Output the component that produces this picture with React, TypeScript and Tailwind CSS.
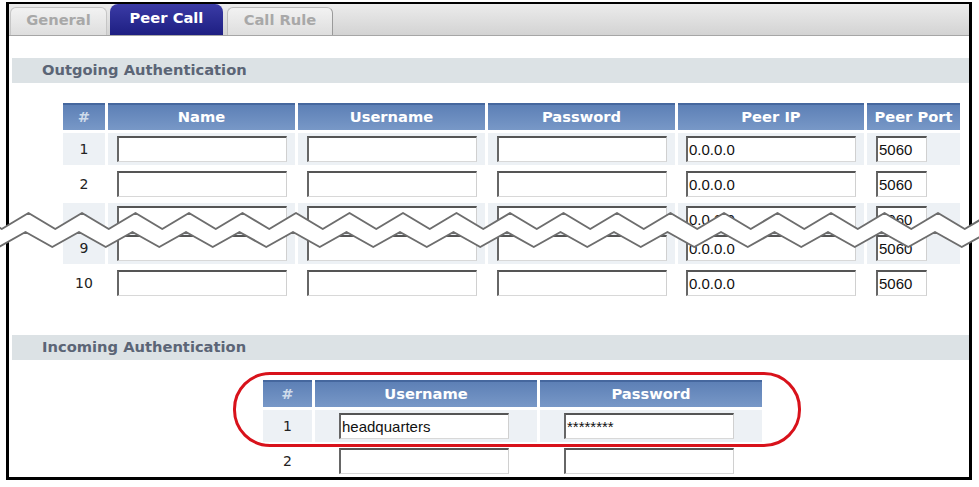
import React from "react"

const outCols = "grid grid-cols-[42px_187px_187px_187px_186px_93px] gap-x-[3px]"
const inCols = "grid grid-cols-[49px_222px_222px] gap-x-[3px]"

const uiFont = "font-['DejaVu_Sans',Verdana,sans-serif]"

// zigzag "torn" break drawn across the outgoing table
function zigPoints(dx: number, yPeak: number, yValley: number) {
    const pts: [number, number][] = []
    let x = 1.75 + dx - 26.75 * 2
    let valley = true
    while (x < 1010) {
        pts.push([x, valley ? yValley : yPeak])
        x += 26.75
        valley = !valley
    }
    return pts
}

const upper = zigPoints(0, 213, 229)
const lower = zigPoints(-3, 232, 247)
const toStr = (p: [number, number][]) => p.map(([x, y]) => `${x},${y}`).join(" ")

function Field({ value = "", small = false }: { value?: string; small?: boolean }) {
    return (
        <input
            readOnly
            value={value}
            className={`${small ? "w-[51px]" : "w-[170px]"} h-[26px] border-t-2 border-l-2 border-r border-b border-t-[#555] border-l-[#666] border-r-[#d0d0d0] border-b-[#d8d8d8] bg-white pl-[1px] text-[15px] text-[#111] outline-none font-['Liberation_Sans',Arial,sans-serif]`}
        />
    )
}

function HeadCell({ label, dim = false }: { label: string; dim?: boolean }) {
    return (
        <div
            className={`flex items-center justify-center h-[27px] border-t-2 border-[#45679e] bg-gradient-to-b from-[#5d80b6] to-[#7898c7] text-[14.7px] font-bold ${dim ? "text-[#cfdbea]" : "text-white"}`}
        >
            {label}
        </div>
    )
}

function OutRow({ n, shaded }: { n: number; shaded: boolean }) {
    const bg = shaded ? "bg-[#edf1f5]" : "bg-white"
    return (
        <div className={`${outCols} h-[32px]`}>
            <div className={`${bg} flex items-center justify-center text-[14px] text-[#222]`}>{n}</div>
            <div className={`${bg} flex items-center justify-center`}><Field /></div>
            <div className={`${bg} flex items-center justify-center`}><Field /></div>
            <div className={`${bg} flex items-center justify-center`}><Field /></div>
            <div className={`${bg} flex items-center justify-center`}><Field value="0.0.0.0" /></div>
            <div className={`${bg} flex items-center pl-[9px]`}><Field value="5060" small /></div>
        </div>
    )
}

function InRow({ n, shaded, user = "", pass = "" }: { n: number; shaded: boolean; user?: string; pass?: string }) {
    const bg = shaded ? "bg-[#edf1f5]" : "bg-white"
    return (
        <div className={`${inCols} h-[32px]`}>
            <div className={`${bg} flex items-center justify-center text-[14px] text-[#222]`}>{n}</div>
            <div className={`${bg} flex items-center pl-6`}><Field value={user} /></div>
            <div className={`${bg} flex items-center pl-6`}><Field value={pass} /></div>
        </div>
    )
}

function SectionBar({ title }: { title: string }) {
    return (
        <div className="ml-[3px] h-[25px] bg-[#dce2e5] flex items-center pl-[30px] text-[14.7px] font-bold text-[#5b6576]">
            {title}
        </div>
    )
}

export default function App() {
    return (
        <div className={`relative w-[979px] h-[487px] bg-white overflow-hidden ${uiFont}`}>
            <div className="ml-[6px] mt-[2px] w-[966px] h-[478px] border-[3px] border-t-2 border-black overflow-hidden">
                {/* tab strip */}
                <div className="flex items-end gap-[3px] pl-[1px] h-[32px] bg-gradient-to-b from-[#ececec] to-[#d3d3d3] border-b border-[#a6a6a6]">
                    <div className="w-[97px] h-[28px] rounded-t-[6px] border border-b-0 border-[#c6c6c6] bg-gradient-to-b from-[#f2f2f2] to-[#dedede] flex items-center justify-center pb-[3px] text-[14.7px] font-bold text-[#a8a8a8]">
                        General
                    </div>
                    <div className="w-[113px] h-[31px] rounded-t-[8px] bg-gradient-to-b from-[#3b3ba6] to-[#1e1e82] flex items-center justify-center pb-[2px] text-[14.7px] font-bold text-white">
                        Peer Call
                    </div>
                    <div className="ml-[1px] w-[106px] h-[28px] rounded-t-[6px] border border-b-0 border-[#bdbdbd] border-r-[#9a9a9a] bg-gradient-to-b from-[#f2f2f2] to-[#dedede] flex items-center justify-center pb-[3px] text-[14.7px] font-bold text-[#a8a8a8]">
                        Call Rule
                    </div>
                </div>

                <div className="mt-[22px]">
                    <SectionBar title="Outgoing Authentication" />
                </div>

                {/* outgoing table */}
                <div className="mt-[20px] ml-[54px] flex flex-col gap-y-[3px]">
                    <div className={outCols}>
                        <HeadCell label="#" dim />
                        <HeadCell label="Name" />
                        <HeadCell label="Username" />
                        <HeadCell label="Password" />
                        <HeadCell label="Peer IP" />
                        <HeadCell label="Peer Port" />
                    </div>
                    <OutRow n={1} shaded />
                    <OutRow n={2} shaded={false} />
                    <div className="h-[26px] overflow-hidden">
                        <OutRow n={3} shaded />
                    </div>
                    <OutRow n={9} shaded />
                    <OutRow n={10} shaded={false} />
                </div>

                <div className="mt-[36px]">
                    <SectionBar title="Incoming Authentication" />
                </div>

                {/* incoming table */}
                <div className="mt-[20px] ml-[254px] flex flex-col gap-y-[3px]">
                    <div className={inCols}>
                        <HeadCell label="#" dim />
                        <HeadCell label="Username" />
                        <HeadCell label="Password" />
                    </div>
                    <InRow n={1} shaded user="headquarters" pass="********" />
                    <InRow n={2} shaded={false} />
                </div>
            </div>

            {/* break marks over the skipped rows */}
            <svg className="absolute left-0 top-0 w-[979px] h-[487px] pointer-events-none" viewBox="0 0 979 487">
                <polygon points={toStr([...upper, ...[...lower].reverse()])} fill="white" />
                <polyline points={toStr(upper)} fill="none" stroke="#6d6d6d" strokeWidth="2" strokeLinejoin="round" />
                <polyline points={toStr(lower)} fill="none" stroke="#6d6d6d" strokeWidth="2" strokeLinejoin="round" />
            </svg>

            {/* highlight around the first incoming row */}
            <div className="absolute left-[233px] top-[372px] w-[568px] h-[75px] rounded-[37px] border-[3px] border-[#d8121b] pointer-events-none" />
        </div>
    )
}
